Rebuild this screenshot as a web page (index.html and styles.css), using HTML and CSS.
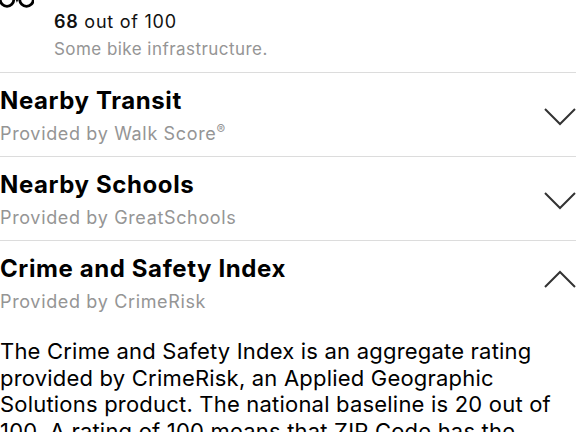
FILE: index.html
```html
<!DOCTYPE html>
<html>
<head>
<meta charset="utf-8">
<link rel="stylesheet" href="styles.css">
</head>
<body>
<div class="score-row">
  <div class="score-icon">
    <svg width="34" height="32" viewBox="0 0 34 32">
      <circle cx="7" cy="23.5" r="6.8" fill="none" stroke="#000" stroke-width="2.8"/>
      <circle cx="26.5" cy="23.5" r="6.8" fill="none" stroke="#000" stroke-width="2.8"/>
      <path d="M7 23.5 L13 12 L22 12 L26.5 23.5 M13 12 L17 23.5 L22 12" fill="none" stroke="#000" stroke-width="2.4"/>
    </svg>
  </div>
  <div class="score-text">
    <div class="score-value"><span class="score-num">68</span> out of 100</div>
    <div class="score-desc">Some bike infrastructure.</div>
  </div>
</div>

<div class="section">
  <div class="section-head">
    <div class="section-title">Nearby Transit</div>
    <div class="section-sub">Provided by Walk Score<sup class="reg">®</sup></div>
  </div>
  <svg class="chev" width="32" height="32" viewBox="0 0 32 32">
    <path d="M1 10 L16 25 L31 10" fill="none" stroke="#333" stroke-width="2"/>
  </svg>
</div>

<div class="section">
  <div class="section-head">
    <div class="section-title">Nearby Schools</div>
    <div class="section-sub">Provided by GreatSchools</div>
  </div>
  <svg class="chev" width="32" height="32" viewBox="0 0 32 32">
    <path d="M1 10 L16 25 L31 10" fill="none" stroke="#333" stroke-width="2"/>
  </svg>
</div>

<div class="section open">
  <div class="section-head">
    <div class="section-title">Crime and Safety Index</div>
    <div class="section-sub">Provided by CrimeRisk</div>
  </div>
  <svg class="chev" width="32" height="32" viewBox="0 0 32 32">
    <path d="M1 20 L16 5 L31 20" fill="none" stroke="#333" stroke-width="2"/>
  </svg>
</div>

<p class="body-text">The Crime and Safety Index is an aggregate rating provided by CrimeRisk, an Applied Geographic Solutions product. The national baseline is 20 out of 100. A rating of 100 means that ZIP Code has the highest crime risk in the nation.</p>
</body>
</html>
```

FILE: styles.css
```css
html, body {
  margin: 0;
  padding: 0;
  background: #fff;
  overflow: hidden;
}
body {
  font-family: Inter, "Noto Sans", "Liberation Sans", sans-serif;
  color: #000;
  width: 576px;
  height: 432px;
}
.score-row {
  display: flex;
  border-bottom: 1px solid #dcdcdc;
  height: 73px;
  box-sizing: border-box;
}
.score-icon {
  width: 54px;
  flex: none;
}
.score-icon svg {
  display: block;
  margin-top: -24px;
}
.score-text {
  padding-top: 11px;
}
.score-value {
  font-size: 18px;
  line-height: 22px;
  color: #111;
  letter-spacing: 0.75px;
}
.score-num {
  font-weight: 600;
}
.score-desc {
  margin-top: 6px;
  font-size: 17px;
  line-height: 21px;
  color: #959595;
  letter-spacing: 0.45px;
}
.section {
  display: flex;
  justify-content: space-between;
  border-bottom: 1px solid #dcdcdc;
  height: 84px;
  box-sizing: border-box;
}
.section.open {
  border-bottom: none;
}
.section-head {
  padding-top: 13px;
}
.section-title {
  font-size: 24px;
  line-height: 29px;
  font-weight: 700;
  letter-spacing: 0.6px;
}
.section-sub {
  margin-top: 8px;
  font-size: 18px;
  line-height: 22px;
  color: #959595;
  letter-spacing: 0.65px;
}
.reg {
  font-size: 13px;
  vertical-align: 0;
  position: relative;
  top: -6px;
}
.chev {
  display: block;
  flex: none;
  margin-top: 26px;
}
.body-text {
  margin: 13px 0 0 0;
  font-size: 22px;
  line-height: 26.5px;
  color: #000;
  letter-spacing: 0.2px;
}
```
